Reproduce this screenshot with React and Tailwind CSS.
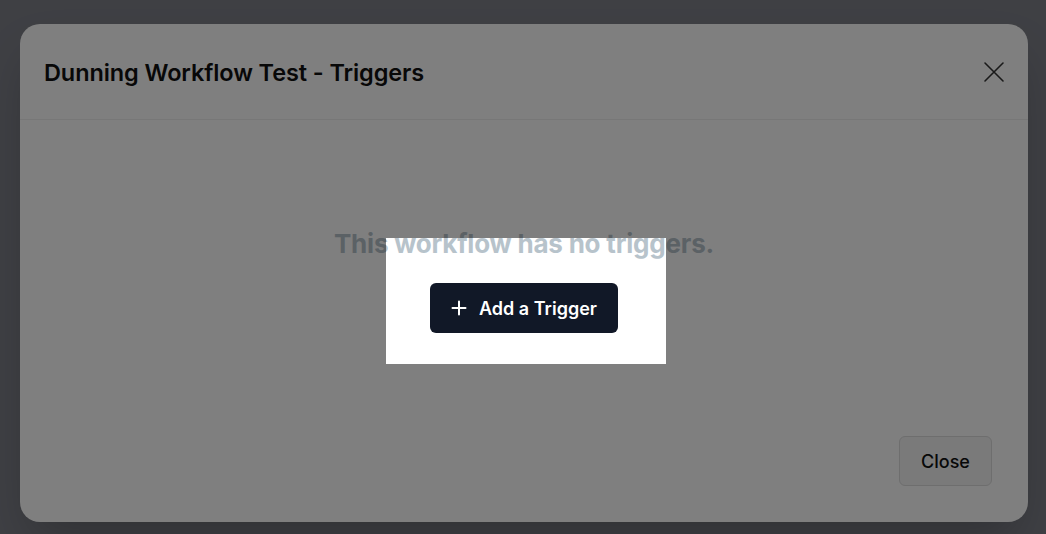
import React from "react";

export default function App() {
  return (
    <div
      className="w-[1046px] h-[534px] overflow-hidden bg-[#7e8089] pt-[24px] pl-[20px]"
      style={{ fontFamily: "Inter, 'Noto Sans', sans-serif" }}
    >
      <div className="w-[1008px] h-[498px] bg-white rounded-[20px] flex flex-col shadow-2xl">
        <div className="h-[96px] shrink-0 border-b border-[#eeeeee] flex items-center justify-between pl-[24px] pr-[22px] pt-[2px]">
          <h2 className="text-[23.5px] font-semibold text-[#111111] tracking-[-0.1px]">
            Dunning Workflow Test - Triggers
          </h2>
          <svg width="24" height="24" viewBox="0 0 24 24" fill="none" stroke="#333" strokeWidth="1.6" strokeLinecap="round" className="-mt-[2px]">
            <path d="M3 3 L21 21 M21 3 L3 21" />
          </svg>
        </div>
        <div className="flex-1 flex flex-col items-center pt-[108px]">
          <p className="text-[26px] leading-[32px] font-bold text-[#b7c3cb] tracking-[-0.2px]">
            This workflow has no triggers.
          </p>
          <div className="relative mt-[23px]">
            <button className="w-[188px] h-[50px] rounded-md bg-[#111827] text-white flex items-center justify-center gap-[12px] text-[18px] font-semibold">
              <svg width="16" height="16" viewBox="0 0 16 16" fill="none" stroke="white" strokeWidth="2" strokeLinecap="round">
                <path d="M8 1.5 V14.5 M1.5 8 H14.5" />
              </svg>
              Add a Trigger
            </button>
            <div className="absolute top-[-45px] left-[-44px] right-[-48px] bottom-[-31px] z-10 pointer-events-none shadow-[0_0_0_9999px_rgba(0,0,0,0.5)]" />
          </div>
        </div>
        <div className="flex justify-end pr-[36px] pb-[36px]">
          <button className="w-[93px] h-[50px] rounded-md border border-[#dcdcdc] bg-[#f4f4f5] text-[18px] font-medium text-[#111111]">
            Close
          </button>
        </div>
      </div>
    </div>
  );
}
